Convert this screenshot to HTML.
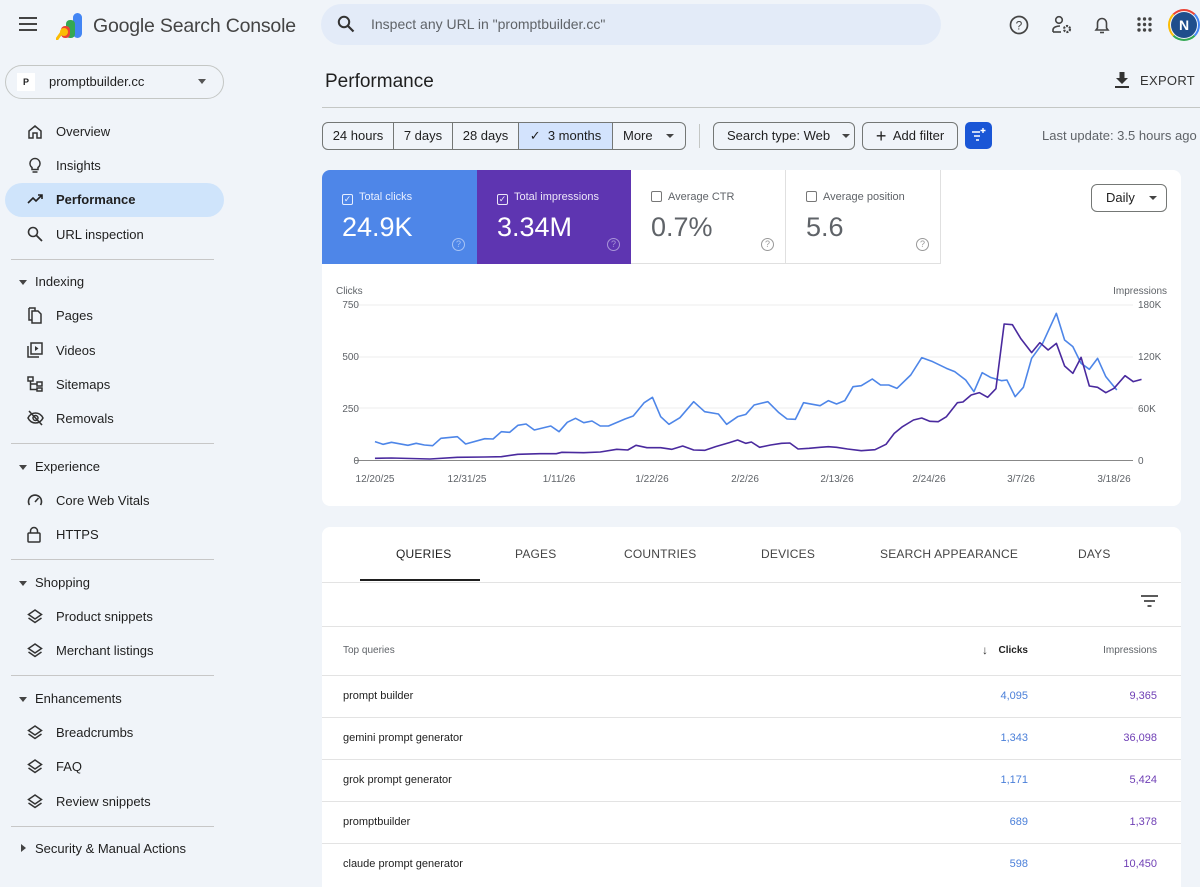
<!DOCTYPE html>
<html><head><meta charset="utf-8"><style>
*{box-sizing:border-box;margin:0;padding:0}
body{width:1200px;height:872px;overflow:hidden;background:#f0f4f9;font-family:"Liberation Sans",sans-serif;color:#1f1f1f;position:relative}
.a{position:absolute}
.nav{position:absolute;left:56px;font-size:13px;color:#1f1f1f}
.ic{position:absolute;left:27px}
.sec{position:absolute;left:35px;font-size:13px;color:#1f1f1f}
.tri{position:absolute;left:19px;width:0;height:0;border-left:4px solid transparent;border-right:4px solid transparent;border-top:5px solid #444}
.div{position:absolute;left:11px;width:203px;height:1px;background:#c7c7c7}
.btn{position:absolute;top:122px;height:28px;border:1px solid #747775;font-size:13px;line-height:26px;text-align:center;color:#1f1f1f;white-space:nowrap}
.tab{position:absolute;top:547px;font-size:12px;color:#444;letter-spacing:.2px}
.row{position:absolute;left:322px;width:859px;height:1px;background:#e3e3e3}
.q{position:absolute;left:343px;font-size:11px;color:#1f1f1f}
.c{position:absolute;right:172px;font-size:11px;color:#4a7fd9}
.im{position:absolute;right:43px;font-size:11px;color:#6f3fb5}
.tile{position:absolute;top:170px;height:94px;width:155px}
.tl{position:absolute;left:20px;top:21px;font-size:11px;white-space:nowrap}
.tv{position:absolute;left:20px;top:42px;font-size:27px}
.cb{display:inline-block;width:11px;height:11px;border:1.3px solid currentColor;border-radius:2px;vertical-align:-2px;margin-right:6px;position:relative;font-size:9px;line-height:8px;text-align:center}
.hq{position:absolute;left:130px;top:68px;width:13px;height:13px;border:1.2px solid currentColor;border-radius:50%;font-size:9px;text-align:center;line-height:11px}
</style></head><body>
<!-- header -->
<svg class="a" style="left:19px;top:17px" width="18" height="14"><rect y="0" width="18" height="2" fill="#444"/><rect y="6" width="18" height="2" fill="#444"/><rect y="12" width="18" height="2" fill="#444"/></svg>
<svg class="a" style="left:56px;top:12px" width="30" height="28" viewBox="0 0 30 28"><rect x="17" y="1" width="9" height="25" rx="4.5" fill="#4285f4"/><rect x="10" y="8" width="9" height="18" rx="4" fill="#34a853"/><rect x="5" y="14" width="9" height="12" rx="4" fill="#ea4335"/><path d="M6 20 L1 27" stroke="#fbbc05" stroke-width="3" stroke-linecap="round"/><circle cx="8" cy="20" r="4" fill="#fbbc05"/></svg>
<div class="a" style="left:93px;top:15px;font-size:19.5px;color:#444;letter-spacing:-.2px">Google Search Console</div>
<div class="a" style="left:321px;top:4px;width:620px;height:41px;border-radius:21px;background:#e3ebf8"></div>
<svg class="a" style="left:337px;top:15px" width="18" height="18" viewBox="0 0 18 18"><circle cx="7" cy="7" r="5.2" fill="none" stroke="#333" stroke-width="2"/><path d="M11 11l5.5 5.5" stroke="#333" stroke-width="2.2"/></svg>
<div class="a" style="left:371px;top:16px;font-size:14px;color:#5f6368">Inspect any URL in "promptbuilder.cc"</div>
<svg class="a" style="left:1009px;top:15px" width="20" height="20" viewBox="0 0 20 20"><circle cx="10" cy="10" r="8.5" fill="none" stroke="#444" stroke-width="1.7"/><text x="10" y="14.5" font-size="12" text-anchor="middle" fill="#444" font-family="Liberation Sans">?</text></svg>
<svg class="a" style="left:1051px;top:15px" width="22" height="20" viewBox="0 0 22 20"><circle cx="8" cy="5" r="3.3" fill="none" stroke="#444" stroke-width="1.6"/><path d="M2 17v-2c0-3 4-4 7-4" fill="none" stroke="#444" stroke-width="1.6"/><path d="M2 17h8" stroke="#444" stroke-width="1.6"/><circle cx="16" cy="14" r="3" fill="none" stroke="#444" stroke-width="2.2" stroke-dasharray="2 1.2"/></svg>
<svg class="a" style="left:1094px;top:15px" width="16" height="20" viewBox="0 0 16 20"><path d="M2 15h12l-1.5-2V8a4.5 4.5 0 0 0-9 0v5z" fill="none" stroke="#444" stroke-width="1.6"/><path d="M6 17.5h4" stroke="#444" stroke-width="1.6"/></svg>
<svg class="a" style="left:1137px;top:17px" width="15" height="15"><g fill="#444"><circle cx="2" cy="2" r="1.7"/><circle cx="7.5" cy="2" r="1.7"/><circle cx="13" cy="2" r="1.7"/><circle cx="2" cy="7.5" r="1.7"/><circle cx="7.5" cy="7.5" r="1.7"/><circle cx="13" cy="7.5" r="1.7"/><circle cx="2" cy="13" r="1.7"/><circle cx="7.5" cy="13" r="1.7"/><circle cx="13" cy="13" r="1.7"/></g></svg>
<div class="a" style="left:1168px;top:9px;width:32px;height:32px;border-radius:50%;border:2px solid #4285f4;border-bottom-color:#34a853;border-left-color:#fbbc05;border-top-color:#ea4335"></div>
<div class="a" style="left:1171px;top:12px;width:26px;height:26px;border-radius:50%;background:#1f4e8c;color:#fff;font-size:14px;font-weight:bold;text-align:center;line-height:26px">N</div>
<!-- property -->
<div class="a" style="left:5px;top:65px;width:219px;height:34px;border:1px solid #c4c7c5;border-radius:17px"></div>
<div class="a" style="left:17px;top:73px;width:18px;height:18px;background:#fff;font-size:9px;font-weight:bold;text-align:center;line-height:18px">P</div>
<div class="a" style="left:49px;top:74px;font-size:13px">promptbuilder.cc</div>
<div class="a" style="left:198px;top:79px;border-left:4.5px solid transparent;border-right:4.5px solid transparent;border-top:5px solid #555"></div>
<!-- sidebar -->
<div class="a" style="left:5px;top:183px;width:219px;height:34px;border-radius:17px;background:#cfe4fb"></div>
<svg class="ic" style="top:124px" width="16" height="16" viewBox="0 0 16 16"><path d="M2 7L8 2l6 5v7H10V9H6v5H2z" fill="none" stroke="#333" stroke-width="1.5"/></svg>
<div class="nav" style="top:124px">Overview</div>
<svg class="ic" style="top:157px" width="16" height="17" viewBox="0 0 16 17"><path d="M8 1.5a5 5 0 0 0-3 9v2h6v-2a5 5 0 0 0-3-9z" fill="none" stroke="#333" stroke-width="1.5"/><path d="M5.5 15h5" stroke="#333" stroke-width="1.5"/></svg>
<div class="nav" style="top:158px">Insights</div>
<svg class="ic" style="top:193px" width="17" height="12" viewBox="0 0 17 12"><path d="M1 10l5-5 3 3 6-6M11 2h4v4" fill="none" stroke="#222" stroke-width="1.6"/></svg>
<div class="nav" style="top:192px;font-weight:bold">Performance</div>
<svg class="ic" style="top:226px" width="16" height="16" viewBox="0 0 16 16"><circle cx="6" cy="6" r="4.5" fill="none" stroke="#333" stroke-width="1.6"/><path d="M9.5 9.5L15 15" stroke="#333" stroke-width="1.8"/></svg>
<div class="nav" style="top:227px">URL inspection</div>
<div class="div" style="top:259px"></div>
<div class="tri" style="top:280px"></div><div class="sec" style="top:274px">Indexing</div>
<svg class="ic" style="top:307px" width="16" height="17" viewBox="0 0 16 17"><path d="M5 4h6l3 3v9H5z M2 1h6v3M2 1v12h3" fill="none" stroke="#333" stroke-width="1.5"/></svg>
<div class="nav" style="top:308px">Pages</div>
<svg class="ic" style="top:342px" width="16" height="16" viewBox="0 0 16 16"><rect x="4" y="1" width="11" height="11" fill="none" stroke="#333" stroke-width="1.5"/><path d="M1 4v11h11" fill="none" stroke="#333" stroke-width="1.5"/><path d="M8 4v5l3.5-2.5z" fill="#333"/></svg>
<div class="nav" style="top:343px">Videos</div>
<svg class="ic" style="top:376px" width="16" height="16" viewBox="0 0 16 16"><g fill="none" stroke="#333" stroke-width="1.5"><rect x="1" y="1" width="5" height="4"/><rect x="10" y="6" width="5" height="4"/><rect x="10" y="12" width="5" height="3"/><path d="M3.5 5v8.5H10M3.5 8H10"/></g></svg>
<div class="nav" style="top:377px">Sitemaps</div>
<svg class="ic" style="top:410px" width="17" height="16" viewBox="0 0 17 16"><path d="M1 8c2-4 5-5 7.5-5S14 4 16 8c-2 4-5 5-7.5 5S3 12 1 8z" fill="none" stroke="#333" stroke-width="1.5"/><circle cx="8.5" cy="8" r="2.5" fill="none" stroke="#333" stroke-width="1.5"/><path d="M2 1l13 14" stroke="#333" stroke-width="1.6"/></svg>
<div class="nav" style="top:411px">Removals</div>
<div class="div" style="top:443px"></div>
<div class="tri" style="top:465px"></div><div class="sec" style="top:459px">Experience</div>
<svg class="ic" style="top:493px" width="16" height="14" viewBox="0 0 16 14"><path d="M2.5 12A6.5 6.5 0 1 1 13.5 12" fill="none" stroke="#333" stroke-width="1.6"/><path d="M8 9l3.5-4" stroke="#333" stroke-width="1.6"/></svg>
<div class="nav" style="top:493px">Core Web Vitals</div>
<svg class="ic" style="top:526px" width="14" height="17" viewBox="0 0 14 17"><rect x="1" y="7" width="12" height="9" rx="1" fill="none" stroke="#333" stroke-width="1.5"/><path d="M3.5 7V5a3.5 3.5 0 0 1 7 0v2" fill="none" stroke="#333" stroke-width="1.5"/></svg>
<div class="nav" style="top:527px">HTTPS</div>
<div class="div" style="top:559px"></div>
<div class="tri" style="top:581px"></div><div class="sec" style="top:575px">Shopping</div>
<svg class="ic" style="top:609px" width="16" height="15" viewBox="0 0 16 15"><path d="M8 1l6.5 4.5L8 10 1.5 5.5z M1.5 9L8 13.5 14.5 9" fill="none" stroke="#333" stroke-width="1.5"/></svg>
<div class="nav" style="top:609px">Product snippets</div>
<svg class="ic" style="top:643px" width="16" height="15" viewBox="0 0 16 15"><path d="M8 1l6.5 4.5L8 10 1.5 5.5z M1.5 9L8 13.5 14.5 9" fill="none" stroke="#333" stroke-width="1.5"/></svg>
<div class="nav" style="top:643px">Merchant listings</div>
<div class="div" style="top:675px"></div>
<div class="tri" style="top:697px"></div><div class="sec" style="top:691px">Enhancements</div>
<svg class="ic" style="top:725px" width="16" height="15" viewBox="0 0 16 15"><path d="M8 1l6.5 4.5L8 10 1.5 5.5z M1.5 9L8 13.5 14.5 9" fill="none" stroke="#333" stroke-width="1.5"/></svg>
<div class="nav" style="top:725px">Breadcrumbs</div>
<svg class="ic" style="top:759px" width="16" height="15" viewBox="0 0 16 15"><path d="M8 1l6.5 4.5L8 10 1.5 5.5z M1.5 9L8 13.5 14.5 9" fill="none" stroke="#333" stroke-width="1.5"/></svg>
<div class="nav" style="top:759px">FAQ</div>
<svg class="ic" style="top:794px" width="16" height="15" viewBox="0 0 16 15"><path d="M8 1l6.5 4.5L8 10 1.5 5.5z M1.5 9L8 13.5 14.5 9" fill="none" stroke="#333" stroke-width="1.5"/></svg>
<div class="nav" style="top:794px">Review snippets</div>
<div class="div" style="top:826px"></div>
<div class="a" style="left:21px;top:844px;border-top:4px solid transparent;border-bottom:4px solid transparent;border-left:5px solid #444"></div>
<div class="sec" style="top:841px">Security &amp; Manual Actions</div>
<!-- main header -->
<div class="a" style="left:325px;top:71px;font-size:19px;color:#1f1f1f">Performance</div>
<svg class="a" style="left:1115px;top:72px" width="14" height="16" viewBox="0 0 14 16"><path d="M4.5 0h5v6h3.5L7 12 1 6h3.5z" fill="#333"/><rect y="14" width="14" height="2" fill="#333"/></svg>
<div class="a" style="left:1140px;top:73px;font-size:13px;color:#333;letter-spacing:.3px">EXPORT</div>
<div class="a" style="left:322px;top:107px;width:878px;height:1px;background:#c4c7c5"></div>
<!-- filter buttons -->
<div class="btn" style="left:322px;width:72px;border-radius:6px 0 0 6px">24 hours</div>
<div class="btn" style="left:393px;width:60px">7 days</div>
<div class="btn" style="left:452px;width:67px">28 days</div>
<div class="btn" style="left:518px;width:95px;background:#d3e3fd">✓&nbsp; 3 months</div>
<div class="btn" style="left:612px;width:74px;border-radius:0 6px 6px 0;text-align:left;padding-left:10px">More <span style="display:inline-block;margin-left:10px;border-left:4px solid transparent;border-right:4px solid transparent;border-top:4.5px solid #444;vertical-align:2px"></span></div>
<div class="a" style="left:699px;top:124px;width:1px;height:24px;background:#c4c7c5"></div>
<div class="btn" style="left:713px;width:142px;border-radius:6px;text-align:left;padding-left:13px">Search type: Web <span style="display:inline-block;margin-left:8px;border-left:4px solid transparent;border-right:4px solid transparent;border-top:4.5px solid #444;vertical-align:2px"></span></div>
<div class="btn" style="left:862px;width:96px;border-radius:6px"><span style="font-size:18px;vertical-align:-2px">+</span>&nbsp; Add filter</div>
<div class="a" style="left:965px;top:122px;width:27px;height:27px;border-radius:5px;background:#1a56d6"></div>
<svg class="a" style="left:971px;top:128px" width="15" height="14" viewBox="0 0 15 14"><path d="M1 4h8M3 8h6M5 12h3" stroke="#fff" stroke-width="1.6"/><path d="M12 0v5M9.5 2.5h5" stroke="#fff" stroke-width="1.4"/></svg>
<div class="a" style="left:1042px;top:128px;font-size:13px;color:#5f6368;white-space:nowrap">Last update: 3.5 hours ago</div>
<!-- chart card -->
<div class="a" style="left:322px;top:170px;width:859px;height:336px;background:#fff;border-radius:8px"></div>
<div class="tile" style="left:322px;background:#4e86e8;color:#fff;border-radius:8px 0 0 0"><div class="tl" style="color:#e8efff"><span class="cb">✓</span>Total clicks</div><div class="tv">24.9K</div><div class="hq" style="color:#a8c4f5">?</div></div>
<div class="tile" style="left:477px;background:#5e35b1;color:#fff;width:154px"><div class="tl" style="color:#ece6f8"><span class="cb">✓</span>Total impressions</div><div class="tv">3.34M</div><div class="hq" style="color:#a995d8">?</div></div>
<div class="tile" style="left:631px;border-right:1px solid #e0e0e0;border-bottom:1px solid #e0e0e0;color:#5f6368"><div class="tl"><span class="cb" style="color:#777"></span>Average CTR</div><div class="tv">0.7%</div><div class="hq" style="color:#999">?</div></div>
<div class="tile" style="left:786px;border-right:1px solid #e0e0e0;border-bottom:1px solid #e0e0e0;color:#5f6368"><div class="tl"><span class="cb" style="color:#777"></span>Average position</div><div class="tv">5.6</div><div class="hq" style="color:#999">?</div></div>
<div class="a" style="left:1091px;top:184px;width:76px;height:28px;border:1px solid #747775;border-radius:6px;font-size:13px;line-height:26px;padding-left:14px">Daily <span style="display:inline-block;margin-left:10px;border-left:4px solid transparent;border-right:4px solid transparent;border-top:4.5px solid #444;vertical-align:2px"></span></div>
<svg class="a" style="left:0;top:0" width="1200" height="520" font-family="Liberation Sans" font-size="10" fill="#5f6368">
<text x="336" y="294">Clicks</text><text x="1167" y="294" text-anchor="end">Impressions</text>
<g stroke="#ececec" stroke-width="1"><line x1="355" y1="305" x2="1133" y2="305"/><line x1="355" y1="357" x2="1133" y2="357"/><line x1="355" y1="408" x2="1133" y2="408"/></g>
<line x1="355" y1="460.5" x2="1133" y2="460.5" stroke="#888" stroke-width="1"/>
<g text-anchor="end"><text x="359" y="308">750</text><text x="359" y="360">500</text><text x="359" y="412">250</text><text x="359" y="464">0</text></g>
<g><text x="1138" y="308">180K</text><text x="1138" y="360">120K</text><text x="1138" y="412">60K</text><text x="1138" y="464">0</text></g>
<g text-anchor="middle"><text x="375" y="482">12/20/25</text><text x="467" y="482">12/31/25</text><text x="559" y="482">1/11/26</text><text x="652" y="482">1/22/26</text><text x="745" y="482">2/2/26</text><text x="837" y="482">2/13/26</text><text x="929" y="482">2/24/26</text><text x="1021" y="482">3/7/26</text><text x="1114" y="482">3/18/26</text></g>
</svg>
<svg class="a" style="left:320px;top:280px" width="860" height="220" viewBox="0 0 1565 660" preserveAspectRatio="none">
<polyline fill="none" stroke="#4e86e8" stroke-width="1.6" vector-effect="non-scaling-stroke" stroke-linejoin="round" points="100,485 115,493 130,487 160,496 175,490 190,495 205,497 220,475 250,470 265,492 300,476 315,477 330,455 345,457 360,436 375,432 390,450 420,438 435,455 450,427 465,415 480,428 495,423 510,438 525,438 555,417 570,408 590,368 605,352 620,410 635,433 655,413 680,365 700,395 725,402 740,433 760,410 775,403 790,375 815,365 835,398 850,417 865,418 880,368 910,377 925,362 940,372 955,362 970,320 985,317 1005,297 1020,315 1035,315 1050,325 1075,285 1095,233 1115,245 1140,265 1155,275 1175,300 1190,335 1205,278 1220,292 1240,302 1250,300 1265,350 1280,322 1295,235 1315,190 1340,100 1355,180 1370,200 1385,250 1400,268 1415,235 1430,290 1450,330"/>
<polyline fill="none" stroke="#4a2a9e" stroke-width="1.6" vector-effect="non-scaling-stroke" stroke-linejoin="round" points="100,535 130,534 200,537 250,532 300,531 330,530 360,523 400,521 430,521 440,517 480,518 510,516 540,508 560,510 575,496 595,503 620,503 640,508 660,498 680,510 700,511 720,500 745,488 760,480 775,490 785,486 800,502 820,495 840,490 855,489 870,507 890,505 910,502 925,500 940,502 960,507 985,512 1010,509 1030,493 1045,460 1060,440 1080,420 1095,414 1110,424 1125,425 1140,410 1160,368 1170,366 1185,345 1200,338 1215,352 1230,326 1245,132 1260,134 1275,175 1295,218 1310,188 1325,210 1340,190 1355,258 1370,280 1385,232 1400,318 1415,322 1430,338 1445,325 1465,287 1480,305 1495,298"/>
</svg>
<!-- table card -->
<div class="a" style="left:322px;top:527px;width:859px;height:360px;background:#fff;border-radius:8px 8px 0 0"></div>
<div class="tab" style="left:396px;color:#1f1f1f">QUERIES</div>
<div class="tab" style="left:515px">PAGES</div>
<div class="tab" style="left:624px">COUNTRIES</div>
<div class="tab" style="left:761px">DEVICES</div>
<div class="tab" style="left:880px">SEARCH APPEARANCE</div>
<div class="tab" style="left:1078px">DAYS</div>
<div class="a" style="left:360px;top:579px;width:120px;height:2px;background:#1f1f1f"></div>
<div class="row" style="top:582px"></div>
<svg class="a" style="left:1141px;top:595px" width="17" height="12"><path d="M0 1h17M3 6h11M6.5 11h4" stroke="#444" stroke-width="1.8"/></svg>
<div class="row" style="top:626px"></div>
<div class="q" style="top:645px;font-size:10px;color:#5f6368">Top queries</div>
<div class="a" style="left:982px;top:643px;font-size:12px;color:#333">↓</div>
<div class="c" style="top:645px;color:#1f1f1f;font-size:10px;font-weight:bold">Clicks</div>
<div class="im" style="top:645px;color:#5f6368;font-size:10px">Impressions</div>
<div class="row" style="top:675px"></div>
<div class="q" style="top:690px">prompt builder</div><div class="c" style="top:690px">4,095</div><div class="im" style="top:690px">9,365</div>
<div class="row" style="top:717px"></div>
<div class="q" style="top:732px">gemini prompt generator</div><div class="c" style="top:732px">1,343</div><div class="im" style="top:732px">36,098</div>
<div class="row" style="top:759px"></div>
<div class="q" style="top:774px">grok prompt generator</div><div class="c" style="top:774px">1,171</div><div class="im" style="top:774px">5,424</div>
<div class="row" style="top:801px"></div>
<div class="q" style="top:816px">promptbuilder</div><div class="c" style="top:816px">689</div><div class="im" style="top:816px">1,378</div>
<div class="row" style="top:843px"></div>
<div class="q" style="top:858px">claude prompt generator</div><div class="c" style="top:858px">598</div><div class="im" style="top:858px">10,450</div>
</body></html>
